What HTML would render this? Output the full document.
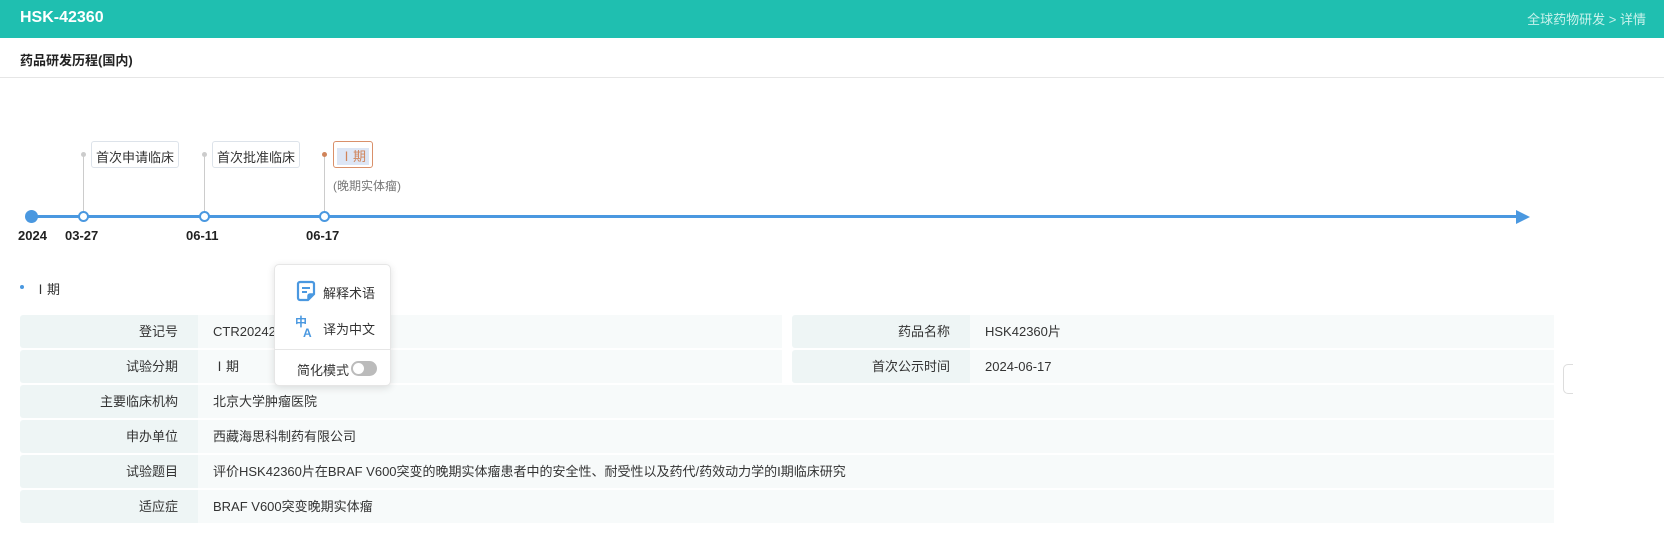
<!DOCTYPE html>
<html><head><meta charset="utf-8"><style>
*{box-sizing:border-box;margin:0;padding:0}
body{width:1664px;height:556px;overflow:hidden;background:#fff;font-family:"Liberation Sans","Noto Sans CJK SC",sans-serif;font-size:13px;color:#333;position:relative}
.hdr{position:absolute;left:0;top:0;width:1664px;height:38px;background:#1fbfb0}
.hdr .t{position:absolute;left:20px;top:9px;color:#fff;font-size:16px;font-weight:bold}
.hdr .b{position:absolute;right:18px;top:9px;color:#c9f2ec;font-size:13px}
.sub{position:absolute;left:0;top:38px;width:1664px;height:40px;border-bottom:1px solid #e6e6e6}
.sub span{position:absolute;left:20px;top:12px;font-weight:bold;font-size:13px;color:#222}
.abs{position:absolute}
.axis{left:30px;top:215px;width:1490px;height:3px;background:#4a98e0}
.arrow{left:1516px;top:210px;width:0;height:0;border-top:7px solid transparent;border-bottom:7px solid transparent;border-left:14px solid #4a98e0}
.dot{width:11px;height:11px;border:2px solid #4a98e0;background:#fff;border-radius:50%;top:211px}
.vl{width:1px;background:#ccc;top:155px;height:57px}
.sd{width:5px;height:5px;border-radius:50%;background:#ccc;top:152px}
.tag{top:141px;height:27px;border:1px solid #dde3ea;border-radius:3px;padding:5px 4px;font-size:13px;color:#333;background:#fff}
.date{top:228px;font-size:13px;color:#222;font-weight:bold}
.row{position:absolute;height:33px;display:flex}
.l{background:#eef5f5;text-align:right;padding-right:20px;line-height:33px;font-size:13px;border-radius:3px 0 0 3px}
.v{background:#f7fafa;padding-left:15px;line-height:33px;font-size:13px;flex:1}
.menu{left:274px;top:264px;width:117px;height:122px;background:#fff;border:1px solid #e6e6e6;border-radius:5px;box-shadow:0 2px 8px rgba(0,0,0,.12)}
</style></head><body>
<div class="hdr"><div class="t">HSK-42360</div><div class="b">全球药物研发 &gt; 详情</div></div>
<div class="sub"><span>药品研发历程(国内)</span></div>

<div class="abs axis"></div><div class="abs arrow"></div>
<div class="abs" style="left:25px;top:210px;width:13px;height:13px;border-radius:50%;background:#4a98e0"></div>
<div class="abs vl" style="left:83px"></div><div class="abs sd" style="left:81px"></div>
<div class="abs vl" style="left:204px"></div><div class="abs sd" style="left:202px"></div>
<div class="abs vl" style="left:324px"></div><div class="abs sd" style="left:322px;background:#d0845a"></div>
<div class="abs dot" style="left:78px"></div>
<div class="abs dot" style="left:199px"></div>
<div class="abs dot" style="left:319px"></div>
<div class="abs tag" style="left:91px">首次申请临床</div>
<div class="abs tag" style="left:212px">首次批准临床</div>
<div class="abs tag" style="left:333px;border-color:#d9906a;color:#d0845a;padding:4px 3px"><span style="background:#dde6f5;padding:1px 3px">Ⅰ期</span></div>
<div class="abs" style="left:333px;top:177px;font-size:12px;color:#777">(晚期实体瘤)</div>
<div class="abs date" style="left:18px">2024</div>
<div class="abs date" style="left:65px">03-27</div>
<div class="abs date" style="left:186px">06-11</div>
<div class="abs date" style="left:306px">06-17</div>

<div class="abs" style="left:20px;top:285px;width:4px;height:4px;border-radius:50%;background:#4a98e0"></div>
<div class="abs" style="left:34px;top:279px;font-size:13px">Ⅰ期</div>

<div class="row" style="left:20px;top:315px;width:762px"><div class="l" style="width:178px">登记号</div><div class="v">CTR20242155</div></div>
<div class="row" style="left:792px;top:315px;width:762px"><div class="l" style="width:178px">药品名称</div><div class="v">HSK42360片</div></div>
<div class="row" style="left:20px;top:350px;width:762px"><div class="l" style="width:178px">试验分期</div><div class="v">Ⅰ期</div></div>
<div class="row" style="left:792px;top:350px;width:762px"><div class="l" style="width:178px">首次公示时间</div><div class="v">2024-06-17</div></div>
<div class="row" style="left:20px;top:385px;width:1534px"><div class="l" style="width:178px">主要临床机构</div><div class="v">北京大学肿瘤医院</div></div>
<div class="row" style="left:20px;top:420px;width:1534px"><div class="l" style="width:178px">申办单位</div><div class="v">西藏海思科制药有限公司</div></div>
<div class="row" style="left:20px;top:455px;width:1534px"><div class="l" style="width:178px">试验题目</div><div class="v">评价HSK42360片在BRAF V600突变的晚期实体瘤患者中的安全性、耐受性以及药代/药效动力学的I期临床研究</div></div>
<div class="row" style="left:20px;top:490px;width:1534px"><div class="l" style="width:178px">适应症</div><div class="v">BRAF V600突变晚期实体瘤</div></div>

<div class="abs menu">
  <svg class="abs" style="left:21px;top:15px" width="20" height="22" viewBox="0 0 20 22"><path d="M4 2h12a2 2 0 0 1 2 2v10l-6 6H4a2 2 0 0 1-2-2V4a2 2 0 0 1 2-2z" fill="none" stroke="#4a98e0" stroke-width="2.2"/><path d="M6 8h8M6 12h5" stroke="#4a98e0" stroke-width="2"/><path d="M12 20v-4a2 2 0 0 1 2-2h4" fill="#4a98e0" stroke="#4a98e0" stroke-width="1.5"/></svg>
  <div class="abs" style="left:48px;top:18px;font-size:13px">解释术语</div>
  <div class="abs" style="left:20px;top:52px;color:#4a98e0;font-weight:bold;font-size:12px;line-height:11px">中<br><span style="position:relative;left:8px">A</span></div>
  <div class="abs" style="left:48px;top:54px;font-size:13px">译为中文</div>
  <div class="abs" style="left:0;top:84px;width:115px;height:1px;background:#e6e6e6"></div>
  <div class="abs" style="left:22px;top:95px;font-size:13px">简化模式</div>
  <div class="abs" style="left:76px;top:96px;width:26px;height:15px;border-radius:8px;background:#bbb"><div style="position:absolute;left:2px;top:2px;width:11px;height:11px;border-radius:50%;background:#fff"></div></div>
</div>
<div class="abs" style="left:1563px;top:364px;width:10px;height:30px;border:1px solid #ddd;border-right:none;border-radius:5px 0 0 5px;background:#fff"></div>
</body></html>
